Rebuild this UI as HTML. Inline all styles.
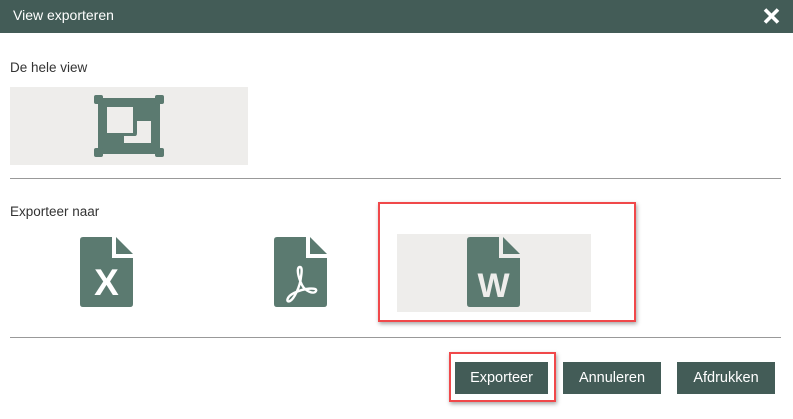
<!DOCTYPE html>
<html><head><meta charset="utf-8"><style>
*{margin:0;padding:0;box-sizing:border-box}
body{width:793px;height:419px;background:#fff;font-family:"Liberation Sans",sans-serif;position:relative;overflow:hidden}
.hd{position:absolute;left:0;top:0;width:793px;height:33px;background:#435c57;color:#fff;font-size:14px;line-height:31px;padding-left:13px}
.abs{position:absolute}
.lbl{position:absolute;left:10px;font-size:13.5px;color:#333}
.line{position:absolute;left:10px;width:771px;height:1px;background:#999}
.gray{position:absolute;background:#eeedeb}
.btn{position:absolute;top:362px;height:32px;background:#435c57;color:#fff;font-size:14.5px;line-height:32px;text-align:center}
.red{position:absolute;border:2px solid #f0484a;box-shadow:1px 2px 4px rgba(0,0,0,.35)}
</style></head><body>
<div class="hd">View exporteren</div>
<svg class="abs" style="left:763px;top:8px" width="17" height="16" viewBox="0 0 17 16"><path d="M2 1.5L15 14.5M15 1.5L2 14.5" stroke="#fff" stroke-width="3.6"/></svg>
<div class="lbl" style="top:60px">De hele view</div>
<div class="gray" style="left:10px;top:87px;width:238px;height:78px"></div>
<svg class="abs" style="left:93px;top:95px" width="72" height="62" viewBox="0 0 72 62">
<path fill="#5b7a70" d="M5 3H67V59H5Z"/>
<rect x="1" y="0" width="9" height="9" rx="2" fill="#5b7a70"/><rect x="62" y="0" width="9" height="9" rx="2" fill="#5b7a70"/>
<rect x="1" y="53" width="9" height="9" rx="2" fill="#5b7a70"/><rect x="62" y="53" width="9" height="9" rx="2" fill="#5b7a70"/>
<path fill="#eeedeb" d="M14 12H40V38H14Z M44 26H58V48H31V41H42Q44 41 44 38Z"/>
</svg>
<div class="line" style="top:178px"></div>
<div class="lbl" style="top:204px">Exporteer naar</div>
<div class="gray" style="left:397px;top:234px;width:194px;height:78px"></div>
<svg width="0" height="0" style="position:absolute"><defs><g id="f"><path fill="#5b7a70" d="M3 0H32V21H53V67Q53 70 50 70H3Q0 70 0 67V3Q0 0 3 0Z"/><path fill="#5b7a70" d="M36 0L53 17H36Z"/></g></defs></svg>
<svg class="abs" style="left:80px;top:237px" width="53" height="70" viewBox="0 0 53 70"><use href="#f"/><text x="26.5" y="58" text-anchor="middle" font-family="Liberation Sans" font-weight="bold" font-size="37" fill="#fff">X</text></svg>
<svg class="abs" style="left:274px;top:237px" width="53" height="70" viewBox="0 0 53 70"><use href="#f"/><path d="M26 30C22 30 24 40 28 48C31 54 40 58 42 54C44 50 30 51 20 56C12 60 12 66 16 64C20 62 26 50 27 40C28 34 28 30 26 30Z" fill="none" stroke="#fff" stroke-width="2.4"/></svg>
<svg class="abs" style="left:467px;top:237px" width="53" height="70" viewBox="0 0 53 70"><use href="#f"/><text x="26.5" y="60" text-anchor="middle" font-family="Liberation Sans" font-weight="bold" font-size="34" fill="#eeedeb">W</text></svg>
<div class="red" style="left:378px;top:202px;width:258px;height:120px"></div>
<div class="line" style="top:337px"></div>
<div class="btn" style="left:455px;width:93px">Exporteer</div>
<div class="btn" style="left:563px;width:98px">Annuleren</div>
<div class="btn" style="left:677px;width:98px">Afdrukken</div>
<div class="red" style="left:449px;top:352px;width:107px;height:50px"></div>
</body></html>
